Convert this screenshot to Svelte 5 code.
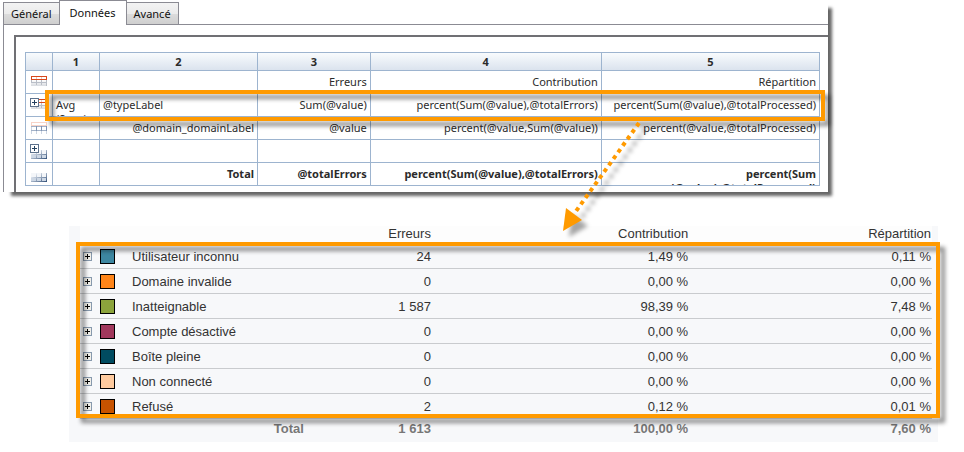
<script>
  const tabs = ['Général', 'Données', 'Avancé'];
  const design = [
    { icon: 'header', cells: ['', '', 'Erreurs', 'Contribution', 'Répartition'] },
    { icon: 'group', left: true, cells: ['Avg\n(Sum(_', '@typeLabel', 'Sum(@value)', 'percent(Sum(@value),@totalErrors)', 'percent(Sum(@value),@totalProcessed)'] },
    { icon: 'detail', cells: ['', '@domain_domainLabel', '@value', 'percent(@value,Sum(@value))', 'percent(@value,@totalProcessed)'] },
    { icon: 'groupfoot', cells: ['', '', '', '', ''] },
    { icon: 'footer', bold: true, cells: ['', 'Total', '@totalErrors', 'percent(Sum(@value),@totalErrors)', 'percent(Sum\n(@value),@totalProcessed)'] }
  ];
  const report = [
    ['#3d87a1', 'Utilisateur inconnu', '24', '1,49 %', '0,11 %'],
    ['#ff8519', 'Domaine invalide', '0', '0,00 %', '0,00 %'],
    ['#8ca43c', 'Inatteignable', '1 587', '98,39 %', '7,48 %'],
    ['#a1385c', 'Compte désactivé', '0', '0,00 %', '0,00 %'],
    ['#004b60', 'Boîte pleine', '0', '0,00 %', '0,00 %'],
    ['#ffcb9f', 'Non connecté', '0', '0,00 %', '0,00 %'],
    ['#c75300', 'Refusé', '2', '0,12 %', '0,01 %']
  ];
</script>

<main>
  <section class="panel">
    <div class="tabs" role="tablist">
      {#each tabs as t, i}
        <button role="tab" aria-selected={i === 1} class:active={i === 1}>{t}</button>
      {/each}
    </div>
    <div class="sheet">
      <div class="inset">
        <table class="design">
          <colgroup><col class="d0" /><col class="d1" /><col class="d2" /><col class="d3" /><col class="d4" /><col /></colgroup>
          <thead>
            <tr><th></th>{#each [1, 2, 3, 4, 5] as n}<th>{n}</th>{/each}</tr>
          </thead>
          <tbody>
            {#each design as row}
              <tr class:bold={row.bold}>
                <td class="icon">
                  <svg width="19" height="18" viewBox="0 0 19 18" shape-rendering="crispEdges">
                    <defs>
                      <linearGradient id="fade-{row.icon}" x2="0" y2="1">
                        <stop stop-color="#fff" /><stop offset="1" stop-color="#d8dbe0" />
                      </linearGradient>
                      <linearGradient id="steel-{row.icon}" x2="1" y2="1">
                        <stop offset=".2" stop-color="#e8edf4" /><stop offset="1" stop-color="#2f4d76" />
                      </linearGradient>
                    </defs>
                    {#if row.icon === 'header' || row.icon === 'group'}
                      <path d="M1 7h16v6H1z" fill="url(#fade-{row.icon})" />
                      <path d="M1.500 7v3M6.500 7v5M11.500 7v5M16.500 7v6M1 9.500h16" stroke="#b9bec7" />
                      <path d="M1.500 3.500h15v3h-15z" fill="#fff" stroke="#d8481c" />
                      <path d="M6.500 4v2M11.500 4v2" stroke="#f0c8ba" />
                    {:else if row.icon === 'detail'}
                      <path d="M1.500 3.500h15v3h-15z" fill="#fff" stroke="#f8d3c7" />
                      <path d="M1.500 7v8M6.500 7v8M11.500 7v8M16.500 7v8" stroke="#ccd5e2" />
                      <path d="M1 7.500h16M1 11.500h16" stroke="#a3b2c8" />
                      <path d="M6.500 7v5M11.500 7v5M16.500 7v5" stroke="#8094b2" />
                    {:else}
                      <path d="M1 8h16v9H1z" fill="url(#steel-{row.icon})" />
                      <path d="M1 8h5v4H1zM7 8h4v4H7zM12 8h4v4h-4z" fill="#f4f6f9" />
                      <path d="M1 13h5v3H1zM7 13h4v3H7zM12 13h4v3h-4z" fill="#cdd7e4" />
                    {/if}
                    {#if row.icon.startsWith('group')}
                      <path d="M.5 2.500h8v8h-8z" fill="#fff" stroke="#5c718c" />
                      <path d="M2 6.500h5M4.500 4v5" stroke="#25415f" />
                    {/if}
                  </svg>
                </td>
                {#each row.cells as c, i}
                  <td class:left={row.left && i < 2}><div class="clip">{c}</div></td>
                {/each}
              </tr>
            {/each}
          </tbody>
        </table>
      </div>
    </div>
    <div class="mark mark-row"></div>
  </section>

  <section class="report">
    <table>
      <colgroup><col class="r0" /><col class="r1" /><col class="r2" /><col class="r3" /><col class="r4" /><col /></colgroup>
      <thead>
        <tr><th colspan="3"></th><th>Erreurs</th><th>Contribution</th><th>Répartition</th></tr>
      </thead>
      <tbody>
        {#each report as [color, label, a, b, c]}
          <tr>
            <td class="exp">
              <button aria-label={'Développer ' + label}>
                <svg width="9" height="9" viewBox="0 0 9 9" shape-rendering="crispEdges">
                  <path d="M.5 .5h8v8h-8z" fill="#f1efe9" stroke="#8799ad" />
                  <path d="M2 4.500h5M4.500 2v5" stroke="#000" />
                </svg>
              </button>
            </td>
            <td class="sw"><span style:background={color}></span></td>
            <td class="name">{label}</td>
            <td>{a}</td><td>{b}</td><td>{c}</td>
          </tr>
        {/each}
      </tbody>
      <tfoot>
        <tr><td colspan="3">Total</td><td>1 613</td><td>100,00 %</td><td>7,60 %</td></tr>
      </tfoot>
    </table>
    <div class="mark mark-rows"></div>
  </section>

  <svg class="arrow" width="100" height="124" viewBox="552 118 100 124" aria-hidden="true">
    <path d="M639 123L574 214" stroke="#ff9a00" stroke-width="4" stroke-dasharray="4 4" />
    <path d="M566 208l16 12-19 11z" fill="#ff9a00" />
  </svg>
</main>

<style>
  :global(body) { background: #fff; }
  main { position: relative; padding: 0 26px 10px 3px; }
  table { border-collapse: separate; border-spacing: 0; table-layout: fixed; width: 100%; }
  th, td { padding: 0; }

  .panel {
    position: relative;
    margin-right: 110px;
    font: 11px/14px "Noto Sans", "Open Sans", sans-serif;
    color: #2b2b2b;
  }
  .panel::before {
    content: "";
    position: absolute;
    inset: 4px 0 0 4px;
    z-index: -1;
    box-shadow: 4px 4px 3px #666;
  }
  .tabs { display: flex; align-items: flex-end; height: 24px; background: #fff; }
  .tabs button {
    height: 22px;
    padding: 0 7px;
    border: 1px solid #8b8b93;
    border-bottom: 0;
    margin-right: -1px;
    background: linear-gradient(#f3f3f3, #ebebeb 50%, #dcdcdc 51%, #cfcfcf);
    font: inherit;
    color: #111;
  }
  .tabs button.active {
    position: relative;
    z-index: 1;
    height: 25px;
    margin-bottom: -1px;
    padding: 0 10px;
    background: #fff;
  }
  .sheet { border: 1px solid #8b8b93; border-width: 1px 0 0 1px; padding: 10px 0 0 10px; background: #fff; }
  .inset {
    border-top: 2px solid #707074;
    border-left: 2px solid #707074;
    padding: 15px 8px 6px 9px;
  }
  .design { border: 1px solid #9db4cf; border-width: 1px 0 0 1px; }
  .design th, .design td { border: 1px solid #9db4cf; border-width: 0 1px 1px 0; }
  .design th { height: 17px; line-height: 17px; background: linear-gradient(#f8fbfd, #dbe3ee); }
  .design td { height: 22px; text-align: right; vertical-align: top; }
  .design td.left { text-align: left; }
  .design .clip { height: 18px; padding: 4px 3px 0; overflow: hidden; white-space: pre; }
  .design .icon { text-align: left; }
  .icon svg { display: block; margin: 2px 0 0 4px; }
  .bold { font-weight: 700; }
  .d0 { width: 27px; }
  .d1 { width: 47px; }
  .d2 { width: 19.9%; }
  .d3 { width: 14.2%; }
  .d4 { width: 29.1%; }

  .mark {
    position: absolute;
    border: 4px solid #ff9a00;
    filter: drop-shadow(5px 5px 2px rgba(0, 0, 0, 0.45));
    pointer-events: none;
  }
  .mark-row { inset: 90px 3px 71px 42px; }

  .report {
    position: relative;
    margin: 34px 0 0 66px;
    padding: 0 6px 0 11px;
    background: #f7f8fa;
    font: 13px/16px "Liberation Sans", Arial, sans-serif;
    color: #333;
  }
  .report th { height: 16px; padding-bottom: 2px; font-weight: 400; background: #fdfdfd; }
  .report th, .report td { text-align: right; padding-right: 1px; }
  .report td { height: 23px; padding-top: 1px; border-bottom: 1px solid #c9cbce; }
  .report tfoot td { height: 18px; padding-bottom: 4px; border: 0; font-weight: 700; color: #777; }
  .report .name { text-align: left; }
  .report .exp, .report .sw { text-align: left; }
  .exp button { display: block; margin-left: 3px; padding: 0; border: 0; background: none; }
  .exp svg { display: block; }
  .sw span { display: block; box-sizing: border-box; width: 15px; height: 15px; border: 1px solid #000; }
  .r0 { width: 20px; }
  .r1 { width: 32px; }
  .r2 { width: 20.3%; }
  .r3 { width: 14.9%; }
  .r4 { width: 30.2%; }
  .mark-rows { inset: 16px -2px 24px 7px; }

  .arrow { position: absolute; left: 552px; top: 118px; filter: drop-shadow(6px 6px 2px rgba(0, 0, 0, 0.35)); }
</style>
